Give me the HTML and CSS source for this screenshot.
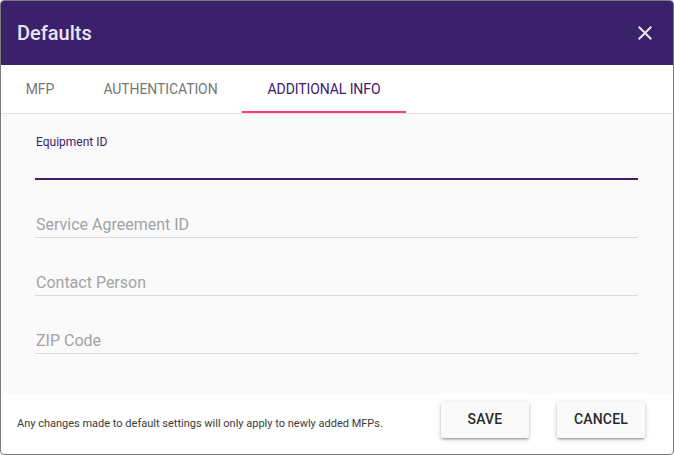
FILE: index.html
```
<!DOCTYPE html>
<html>
<head>
<meta charset="utf-8">
<link rel="stylesheet" href="styles.css">
</head>
<body>
<div class="dialog">
  <header class="header">
    <h1 class="title">Defaults</h1>
    <button class="close" aria-label="Close">
      <svg width="24" height="24" viewBox="0 0 24 24"><path d="M19 6.41L17.59 5 12 10.59 6.41 5 5 6.41 10.59 12 5 17.59 6.41 19 12 13.41 17.59 19 19 17.59 13.41 12z" fill="currentColor"/></svg>
    </button>
  </header>
  <nav class="tabs">
    <div class="tab tab-mfp">MFP</div>
    <div class="tab tab-auth">AUTHENTICATION</div>
    <div class="tab tab-info active">ADDITIONAL INFO</div>
  </nav>
  <main class="content">
    <div class="field focused">
      <div class="label">Equipment ID</div>
    </div>
    <div class="field">
      <div class="placeholder">Service Agreement ID</div>
    </div>
    <div class="field">
      <div class="placeholder">Contact Person</div>
    </div>
    <div class="field">
      <div class="placeholder">ZIP Code</div>
    </div>
  </main>
  <footer class="footer">
    <p class="note">Any changes made to default settings will only apply to newly added MFPs.</p>
    <div class="actions">
      <button class="btn">SAVE</button>
      <button class="btn">CANCEL</button>
    </div>
  </footer>
</div>
</body>
</html>
```
FILE: styles.css
```
* { box-sizing: border-box; }
html, body { margin: 0; padding: 0; }
body {
  font-family: Roboto, "Liberation Sans", Arial, sans-serif;
  background: #ffffff;
}
.dialog {
  width: 674px;
  height: 455px;
  border: 1px solid #7b7b7b;
  border-radius: 4px;
  overflow: hidden;
  display: flex;
  flex-direction: column;
  background: #ffffff;
}
.header {
  height: 64px;
  flex: 0 0 64px;
  background: #3b206c;
  display: flex;
  align-items: center;
  justify-content: space-between;
  padding: 0 16px 0 16px;
}
.title {
  margin: 0;
  font-size: 20px;
  font-weight: 500;
  line-height: 64px;
  color: #e9e5f0;
}
.close {
  border: 0;
  background: none;
  padding: 0;
  margin: 0;
  width: 24px;
  height: 24px;
  color: #ebe7f1;
  display: flex;
}
.tabs {
  height: 49px;
  flex: 0 0 49px;
  display: flex;
  border-bottom: 1px solid #e2e2e2;
  background: #ffffff;
}
.tab {
  padding: 0;
  font-size: 14px;
  line-height: 48px;
  height: 48px;
  color: #777777;
  text-align: center;
  letter-spacing: -0.1px;
}
.tab-mfp { width: 78px; }
.tab-auth { width: 163px; }
.tab-info { width: 164px; }
.tab.active {
  color: #3b206c;
  box-shadow: inset 0 -2px 0 #ff3d7f;
}
.content {
  flex: 0 0 279px;
  background: #fafafa;
  padding: 8px 35px 39px 34px;
}
.field {
  height: 58px;
  border-bottom: 1px solid #dadada;
}
.field.focused {
  border-bottom: 2px solid #3b206c;
}
.label {
  padding-top: 13px;
  padding-left: 1px;
  font-size: 12px;
  line-height: 14px;
  color: #3b206c;
}
.placeholder {
  padding-top: 35px;
  padding-left: 1px;
  font-size: 16px;
  line-height: 19px;
  color: #a3a3a3;
}
.footer {
  flex: 1 1 auto;
  display: flex;
  align-items: flex-start;
  justify-content: space-between;
  padding: 9px 28px 0 16px;
}
.note {
  margin: 15px 0 0 0;
  font-size: 11px;
  line-height: 13px;
  color: #3a3a3a;
}
.actions {
  display: flex;
  gap: 28px;
}
.btn {
  width: 88px;
  height: 36px;
  border: 0;
  border-radius: 2px;
  background: #fafafa;
  font-family: Roboto, "Liberation Sans", Arial, sans-serif;
  font-size: 14px;
  font-weight: 500;
  letter-spacing: 0.2px;
  color: #2a2a2a;
  padding: 0 0 3px 0;
  box-shadow: 0 2px 2px rgba(0,0,0,.14), 0 3px 1px -2px rgba(0,0,0,.12), 0 1px 5px rgba(0,0,0,.2);
}
```
